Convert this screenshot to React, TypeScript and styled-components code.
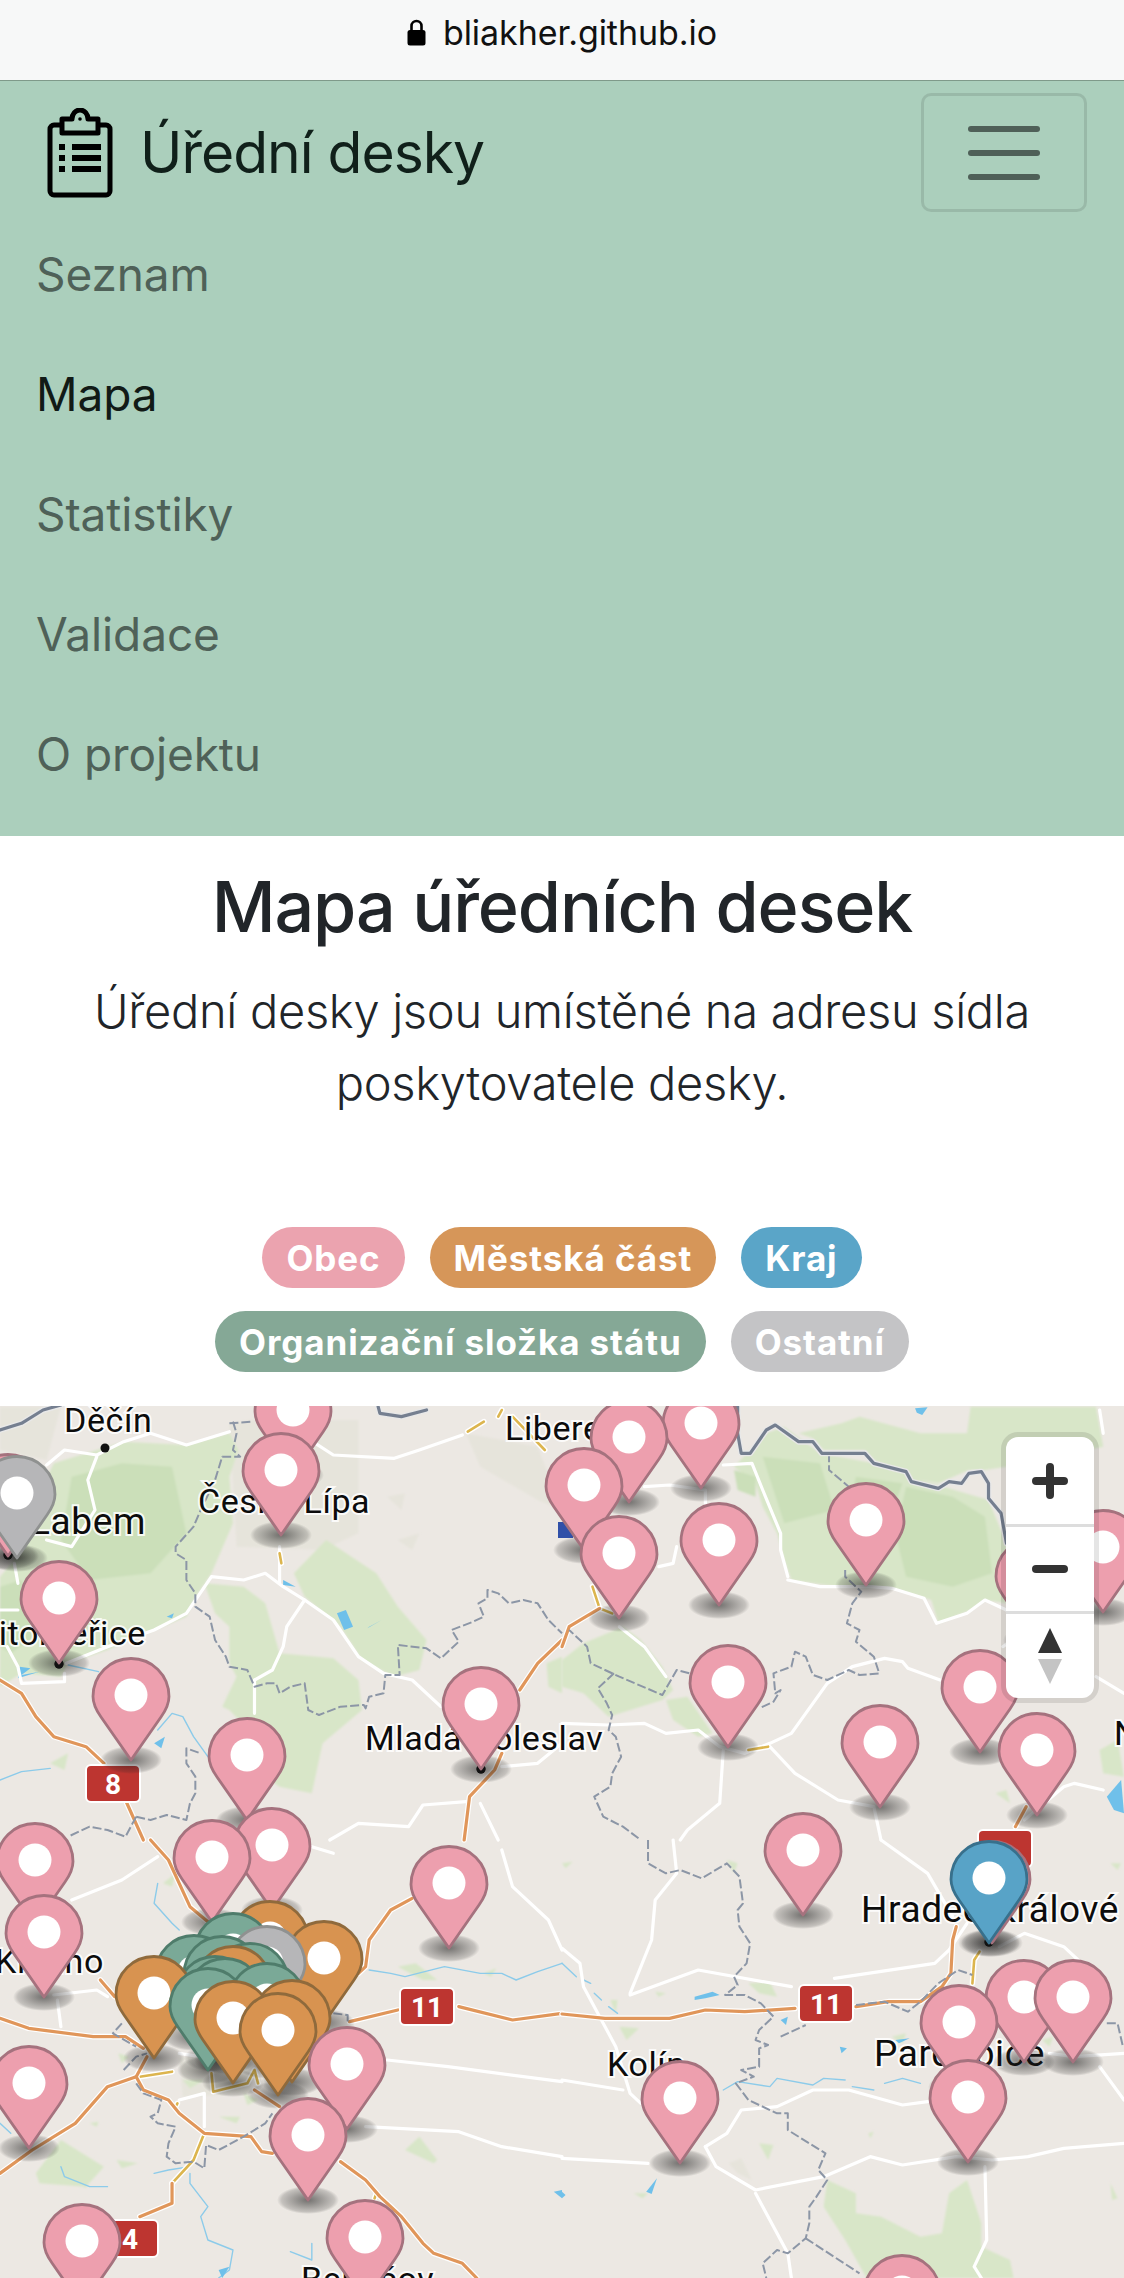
import React from "react";
import styled, { createGlobalStyle } from "styled-components";

const MAP_TOP = 1406;
const SANS = `Inter, "Liberation Sans", sans-serif`;

const Global = createGlobalStyle`
  html, body { margin: 0; padding: 0; background: #fff; }
  body { width: 1124px; height: 2278px; overflow: hidden; font-family: ${SANS}; }
`;

const Page = styled.div`
  width: 1124px;
  height: 2278px;
  display: flex;
  flex-direction: column;
  overflow: hidden;
`;

const AddressBar = styled.div`
  height: 81px;
  flex: none;
  box-sizing: border-box;
  padding-bottom: 15px;
  display: flex;
  align-items: center;
  justify-content: center;
  gap: 17px;
  background: #f7f8f8;
  border-bottom: 1px solid #7f9a8a;
  color: #111;
  font-size: 34px;
  letter-spacing: -0.05px;
`;

const Navbar = styled.nav`
  flex: none;
  height: 755px;
  box-sizing: border-box;
  background: #abcfbc;
  padding: 12px 37px 22px 36px;
  display: flex;
  flex-direction: column;
`;

const BrandRow = styled.div`
  height: 121px;
  flex: none;
  display: flex;
  justify-content: space-between;
  align-items: flex-start;
`;

const Brand = styled.div`
  display: flex;
  align-items: center;
  gap: 27px;
  padding: 15px 0 0 11px;
  color: #10201a;
  font-size: 57px;
  letter-spacing: -1px;
  line-height: 90px;
`;

const Toggler = styled.button`
  width: 166px;
  height: 119px;
  box-sizing: border-box;
  background: transparent;
  border: 3px solid rgba(0, 0, 0, 0.1);
  border-radius: 10px;
  padding: 0;
  display: flex;
  flex-direction: column;
  align-items: center;
  justify-content: center;
  gap: 18px;
`;

const TogglerBar = styled.span`
  width: 72px;
  height: 6px;
  border-radius: 3px;
  background: #4f6058;
`;

const NavList = styled.div`
  display: flex;
  flex-direction: column;
`;

const NavItem = styled.a<{ $active?: boolean }>`
  height: 120px;
  display: flex;
  align-items: center;
  font-size: 46px;
  letter-spacing: -0.1px;
  color: ${(p) => (p.$active ? "#111a16" : "#4f6158")};
`;

const Hero = styled.header`
  flex: none;
  height: 283px;
  box-sizing: border-box;
  padding-top: 29px;
  text-align: center;
  color: #212529;
`;

const Title = styled.h1`
  margin: 0 0 26px;
  font-size: 70px;
  font-weight: 500;
  line-height: 84px;
  letter-spacing: -1.1px;
`;

const Lead = styled.p`
  margin: 0 auto;
  width: 1000px;
  font-size: 47px;
  line-height: 72px;
  font-weight: 340;
  letter-spacing: -0.3px;
`;

const Legend = styled.div`
  flex: none;
  height: 287px;
  box-sizing: border-box;
  padding-top: 108px;
  display: flex;
  flex-direction: column;
  align-items: center;
  gap: 23px;
`;

const LegendRow = styled.div`
  display: flex;
  gap: 25px;
`;

const Badge = styled.span<{ $bg: string }>`
  height: 61px;
  display: flex;
  align-items: center;
  padding: 0 24px;
  border-radius: 31px;
  background: ${(p) => p.$bg};
  color: #fff;
  font-size: 35px;
  font-weight: 700;
  letter-spacing: 0.9px;
`;

const MapCanvas = styled.section`
  position: relative;
  flex: 1;
  overflow: hidden;
  background: #ece8e3;
`;

const BaseMap = styled.svg`
  position: absolute;
  left: 0;
  top: 0;
  display: block;
`;

const PlaceLabel = styled.text<{ $big?: boolean }>`
  font-family: Roboto, "Liberation Sans", sans-serif;
  font-size: ${(p) => (p.$big ? 37 : 34)}px;
  letter-spacing: 0.6px;
  fill: #0c0c0c;
  stroke: rgba(255, 255, 255, 0.85);
  stroke-width: 4px;
  paint-order: stroke;
`;

const ShieldText = styled.text`
  font-family: Roboto, "Liberation Sans", sans-serif;
  font-size: 28px;
  font-weight: 700;
  fill: #fff;
  text-anchor: middle;
`;

const PinSvg = styled.svg`
  position: absolute;
  display: block;
  overflow: visible;
`;

const PinShadow = styled.div`
  position: absolute;
  width: 62px;
  height: 28px;
  border-radius: 50%;
  background: radial-gradient(closest-side, rgba(20, 20, 20, 0.56), rgba(30, 30, 30, 0.33) 55%, rgba(40, 40, 40, 0.2) 85%, rgba(40, 40, 40, 0));
`;

const Controls = styled.div`
  position: absolute;
  left: 1006px;
  top: 31px;
  width: 88px;
  display: flex;
  flex-direction: column;
  background: #fff;
  border-radius: 12px;
  box-shadow: 0 0 0 5px rgba(0, 0, 0, 0.1);
  overflow: hidden;
`;

const ControlButton = styled.button`
  height: 87px;
  box-sizing: border-box;
  padding: 0;
  border: 0;
  background: transparent;
  display: flex;
  align-items: center;
  justify-content: center;
  & + & {
    border-top: 3px solid #ddd;
  }
`;

/* ---------- base-map data, one group for each zoom quadrant ---------- */

type Layer = { green?: string[]; shade?: string[]; gray?: string[]; water?: string[]; lake?: string[]; white?: string[]; orange?: string[]; gold?: string[]; dash?: string[]; border?: string[] };

const Q1: Layer = {
  green: [
    "150,190 270,150 345,125 520,135 640,100 665,150 640,230 650,370 590,520 540,600 520,650 430,690 300,750 190,790 170,830 60,820 0,860 0,530 40,480 100,300",
    "820,520 910,420 1050,520 1110,620 1190,720 1170,810 1100,830 1010,780 950,680 850,590",
    "570,550 680,560 740,610 780,760 930,775 1000,840 1010,930 900,1030 870,1180 780,1160 740,1130 720,1020 640,930 620,920 660,830 640,790 640,680 600,640",
    "1525,790 1568,770 1568,880 1530,860",
    "140,1090 190,1060 180,1110",
  ],
  shade: ["200,230 340,190 480,200 520,400 420,520 250,540 170,420", "0,560 60,540 110,700 30,760 0,740", "1330,850 1355,800 1400,900"],
  gray: ["640,70 700,60 1000,60 1000,400 900,450 660,440", "0,20 170,20 130,180 0,150", "1300,100 1500,140 1568,330 1500,300 1340,200", "1080,290 1130,280 1120,330", "1110,420 1170,400 1150,450"],
  water: ["190,795 275,815", "440,990 480,940 510,950 540,1010 580,1070", "0,1140 60,1115 140,1105"],
  lake: ["940,640 965,630 985,680 960,690", "1030,680 1065,660 1025,685", "790,540 825,560 790,555", "465,650 485,640 480,655", "55,800 85,805 60,825 110,815 50,835", "430,1030 460,1010 450,1045"],
  white: [
    "130,195 180,150 270,165 345,125 420,100 520,135 640,95",
    "270,170 245,240 265,330 200,440 130,420",
    "185,790 300,740 430,690 520,640 590,530 680,540 740,520 790,560 850,600 930,660 1000,770 1070,820 1150,840 1230,920",
    "780,440 780,550",
    "850,600 800,680 790,740 760,810 710,840 710,940",
    "880,130 930,165 1100,175 1170,150 1290,105",
    "40,490 50,550",
    "0,630 50,630",
    "20,740 50,800 60,850 180,845 180,820",
    "1400,1100 1500,1090 1568,1030",
    "920,1320 1000,1270 1140,1280 1180,1215 1300,1205",
    "1340,1210 1390,1320",
  ],
  orange: ["0,840 60,880 100,950 150,1010 240,1040 290,1090", "350,1200 400,1320", "1568,720 1500,790 1450,870", "1400,1060 1380,1110 1310,1190 1295,1320"],
  gold: ["780,460 785,490", "1305,95 1350,65", "1400,30 1390,50", "1430,50 1520,150"],
  dash: [
    "650,65 660,100 650,150 670,170 620,170 600,240 560,330 540,380 490,440 490,460 520,480 520,540 545,580 545,620 585,650 600,720 630,770 640,800 690,810 710,860 745,850 770,850 780,880 810,860 850,850 855,890 860,930 890,945 950,920 1015,915 1020,925 1030,890 1070,880 1075,825 1115,825 1110,735 1190,745 1230,775 1280,725 1260,690 1320,665 1350,650 1335,610 1360,595 1360,570 1390,580 1420,610 1460,600 1500,610 1530,660 1568,700",
    "380,1250 420,1260 465,1245 520,1260 530,1210 545,1180 545,1130 520,1090 520,1045 560,1060",
    "380,1250 350,1310 300,1290 250,1280 190,1310",
    "640,70 700,65",
  ],
  border: ["1055,20 1060,40 1120,50 1190,30", "0,90 60,70 120,30 170,15"],
};

const Q2: Layer = {
  green: [
    "480,200 570,100 620,80 720,160 870,190 1000,240 1190,300 1240,430 1240,610 1180,600 1140,630 1050,670 1030,600 910,560 770,560 640,540 620,480 600,400 560,320 540,250",
    "780,70 830,50 1000,100 1130,100 1140,20 1490,20 1510,140 1240,200 1180,210 1135,210 1050,250 975,235 870,180 845,150 730,150 700,115 660,100",
    "0,780 60,730 170,680 220,720 280,800 310,870 280,900 130,950 60,880 0,860",
    "290,900 350,890 420,1000 380,1010 310,960",
    "1500,1050 1550,1020 1568,1130 1510,1120",
    "1210,1180 1240,1170 1250,1210",
  ],
  shade: ["960,260 1090,290 1180,350 1200,520 1090,560 960,530 930,400", "560,170 720,190 760,330 620,370", "480,210 540,230 540,290 490,270", "820,230 950,250 920,340 800,330"],
  lake: ["985,25 1020,22 1005,45 990,38", "1520,1190 1560,1140 1568,1240 1540,1230"],
  white: [
    "630,540 720,560 770,560 860,560 920,565 1010,595 1045,670 1130,640 1180,600 1240,630",
    "450,195 530,190 560,270 610,400 610,450 630,530",
    "230,260 300,255 400,270 400,310",
    "320,440 310,490 270,500",
    "160,680 230,740 290,830",
    "0,970 130,975 230,970 290,1000 380,990 440,1040 510,1060 580,1030 640,1000 700,910 740,850 810,800 900,775 950,785 965,805 1055,840",
    "450,1050 440,1210 350,1290 330,1320",
    "580,1040 650,1120 770,1200 870,1220 890,1320",
    "1290,1260 1400,1160 1430,1150 1510,1170",
    "1230,740 1280,700",
    "1490,830 1568,880",
    "1500,30 1510,100",
  ],
  orange: ["105,625 20,680 0,740", "1265,1280 1295,1220"],
  gold: ["520,1050 575,1040", "85,560 105,625 140,640"],
  dash: [
    "745,160 745,210 800,260",
    "790,510 790,530 835,575 810,610 795,670 830,690 820,725 870,770 885,820 830,825 800,810 740,840 700,825 680,770 650,755 640,800 590,820 595,880 610,870 590,905 550,925",
    "355,820 320,810 280,885 160,830 80,790 70,740 20,690",
    "145,820 100,865 125,910 140,945 130,990 150,1010 165,1070 140,1120 135,1160 90,1190 115,1250 170,1280 220,1320",
  ],
  border: ["490,20 490,100 500,160 525,160 570,90 595,75 660,125 700,125 725,160 845,160 870,190 960,215 975,245 1050,265 1080,245 1115,250 1135,220 1170,215 1190,250 1190,295 1225,340 1240,430"],
};

const Q3: Layer = {
  green: [
    "100,1000 170,900 290,980 240,1040 110,1030",
    "1110,380 1160,370 1220,420 1180,420",
    "1130,930 1170,890 1220,960 1210,970",
    "455,130 490,100 480,140",
    "330,640 360,650 340,670",
    "610,830 670,830 660,850",
    "1350,400 1385,385 1370,410",
    "325,960 385,970 340,985",
    "250,850 275,845 270,860",
    "220,1030 245,1030 240,1045",
    "510,720 570,720 530,745",
    "680,760 720,780 690,795",
  ],
  gray: ["500,650 700,650 700,760 510,770"],
  water: ["440,130 430,190 480,250 500,270", "1030,390 1090,400 1130,410 1240,380 1340,400 1400,400 1440,420 1500,395 1568,370", "530,1000 530,1030 580,1100 560,1130 580,1200 650,1230 640,1290 610,1314", "810,1235 870,1260 870,1210", "170,980 180,1010 250,1040 300,1040", "430,1000 470,990 530,980", "0,850 30,880"],
  lake: ["1545,1055 1568,1050 1568,1075", "610,1290 640,1280 620,1314"],
  white: [
    "200,180 340,120 440,50",
    "150,465 270,450 300,470",
    "160,480 170,560",
    "1080,660 1250,680 1568,725",
    "1020,860 1280,875 1400,920 1568,950",
    "870,20 930,40",
    "1400,30 1430,140 1530,240 1568,330",
    "500,780 570,760 570,860",
    "500,640 620,660",
  ],
  orange: [
    "0,535 80,565 260,590 350,590 400,625",
    "410,650 380,710 300,740 210,850 90,930 0,1000",
    "420,0 470,60 530,200 580,245",
    "1150,175 1090,210 1030,300 1020,380 1000,400",
    "975,545 1110,510",
    "1280,500 1430,540 1568,520",
    "710,750 780,800",
    "380,710 400,750 470,780 500,820 570,880 700,890 730,935 760,940",
    "950,965 1020,1020 1060,1070 1120,1130 1180,1210 1210,1240 1290,1270 1330,1314",
    "480,1030 480,1090 390,1130",
    "280,420 320,470",
  ],
  gold: ["390,710 480,695", "590,700 595,755 690,730 710,690 720,730", "570,880 540,960 480,1030", "1050,1060 1045,1075", "495,790 490,800"],
  dash: [
    "340,550 315,580 380,620",
    "345,690 380,650 410,640",
    "380,730 400,760 450,780 440,820 420,830 440,850 490,860 470,910 465,950 490,970 540,965 570,985 575,915 610,930 680,890 740,850 760,820",
    "930,520 970,525 970,545",
  ],
};

const Q4: Layer = {
  green: [
    "740,1020 820,1060 820,1120 890,1130 1000,1190 1060,1180 1080,1060 1130,1020 1170,1150 1170,1220 1250,1260 1260,1314 850,1314 790,1200 730,1100",
    "520,430 580,425 600,470 550,460",
    "160,560 215,565 180,600",
    "135,480 155,480 150,520",
    "550,910 590,915 575,960",
    "200,1060 240,1060 225,1075",
    "1530,1030 1550,1075 1535,1080",
    "855,880 870,875 860,895",
    "260,455 290,460 270,470",
    "460,60 490,70 480,100",
    "1530,70 1560,70 1550,90",
    "0,70 30,65 10,85",
    "920,590 960,580 950,610",
    "1340,600 1370,590 1360,620",
  ],
  gray: ["465,970 500,955 530,1020 490,1000"],
  water: ["450,750 490,725 580,740 600,715 700,735 730,715 790,720", "810,740 870,750", "900,730 950,715 1000,730", "0,370 40,410", "60,420 80,430", "90,460 110,480", "130,500 155,520"],
  lake: ["370,470 420,455 440,465 400,475 370,480", "610,540 630,530 625,555", "775,620 795,625 780,640", "235,1055 265,1015 250,1062", "930,600 970,595 940,610", "0,1055 10,1065 0,1075"],
  white: [
    "0,325 50,370 60,440 110,540 150,620 190,760 220,790",
    "190,460 250,300 260,180 320,100 310,0",
    "190,465 380,390 640,440",
    "760,415 1040,370 1080,330 1130,250",
    "890,0 1020,100 1090,230",
    "1220,320 1290,280 1400,320 1500,420",
    "0,720 170,750",
    "0,955 240,970",
    "400,920 460,880 500,810 600,800 700,750 800,750 950,795 1020,785",
    "400,920 430,980 540,1050 730,1010 860,950 950,975 1100,950 1200,960 1300,950 1400,925 1568,910",
    "540,1060 630,1240 640,1314",
    "1180,980 1185,1200 1150,1280 1170,1314",
    "1500,680 1568,780",
    "1360,640 1430,650 1568,640",
  ],
  orange: ["0,522 120,535 300,535 400,510 510,515 650,505", "820,500 910,485 1000,485 1060,440 1085,400 1090,300 1100,260"],
  gold: ["1145,430 1150,360 1165,335"],
  dash: [
    "240,0 240,70 290,100 330,90 390,115 460,70 495,110 505,190 490,210 495,260 525,310 515,370 480,410 490,435 455,465 510,465 555,490 590,530 550,570 540,600 575,615 550,625 550,680 500,690 535,710 485,730 520,780 600,820 630,820 630,870 735,940 715,990 740,1020 710,1070 690,1100 690,1150 680,1195 630,1240 600,1230 560,1270 570,1314",
    "680,1195 830,1300",
    "610,590 680,555",
    "820,495 900,485 965,515 1000,485 1050,430 1105,390 1145,405",
    "1520,550 1550,550 1565,620",
  ],
};

const MapLayer = ({ x, y, sx, sy, data }: { x: number; y: number; sx: number; sy: number; data: Layer }) => {
  const lines = (list: string[] | undefined, props: React.SVGProps<SVGPolylineElement>) =>
    (list ?? []).map((pts) => <polyline key={pts} points={pts} fill="none" strokeLinejoin="round" strokeLinecap="round" vectorEffect="non-scaling-stroke" {...props} />);
  return (
    <g transform={`translate(${x} ${y}) scale(${sx} ${sy})`}>
      <g filter="url(#soft)">
        {(data.gray ?? []).map((p) => <polygon key={p} points={p} fill="#e6e4db" />)}
        {(data.green ?? []).map((p) => <polygon key={p} points={p} fill="#d8e6c8" />)}
        {(data.shade ?? []).map((p) => <polygon key={p} points={p} fill="#cbdfb9" />)}
      </g>
      {lines(data.water, { stroke: "#8ccbea", strokeWidth: 1.4 })}
      {(data.lake ?? []).map((p) => <polygon key={p} points={p} fill="#6fc0ea" />)}
      {lines(data.white, { stroke: "#fff", strokeWidth: 3.2 })}
      {lines(data.gold, { stroke: "#fff", strokeWidth: 5.5 })}
      {lines(data.gold, { stroke: "#dcb54e", strokeWidth: 2.6 })}
      {lines(data.orange, { stroke: "#fff", strokeWidth: 5.6 })}
      {lines(data.orange, { stroke: "#e0965a", strokeWidth: 3.2 })}
      {lines(data.dash, { stroke: "#8c96a6", strokeWidth: 2, strokeDasharray: "9 3", strokeLinecap: "butt" })}
      {lines(data.border, { stroke: "#e8e8e8", strokeWidth: 6 })}
      {lines(data.border, { stroke: "#757f90", strokeWidth: 3.2 })}
    </g>
  );
};

const labels = [
  { t: "Děčín", x: 64, y: 1432 },
  { t: "Labem", x: 146, y: 1534, end: true, big: true },
  { t: "Litoměřice", x: 146, y: 1645, end: true },
  { t: "Česká Lípa", x: 198, y: 1513 },
  { t: "Liberec", x: 505, y: 1440 },
  { t: "Mladá Boleslav", x: 365, y: 1750 },
  { t: "Hradec Králové", x: 861, y: 1922, big: true },
  { t: "Pardubice", x: 874, y: 2066, big: true },
  { t: "Kolín", x: 607, y: 2076 },
  { t: "Kladno", x: 104, y: 1973, end: true },
  { t: "Benešov", x: 301, y: 2291 },
  { t: "Náchod", x: 1114, y: 1745 },
];

const shields = [
  { t: "8", x: 86, y: 1765 },
  { t: "11", x: 400, y: 1988 },
  { t: "11", x: 799, y: 1985 },
  { t: "4", x: 104, y: 2220, tx: 130 },
  { t: "", x: 978, y: 1830 },
];

const cityDots = [
  [105, 1448],
  [8, 1555],
  [59, 1664],
  [481, 1769],
  [989, 1942],
];

type Kind = "pink" | "orange" | "green" | "blue" | "gray";
const pinColors: Record<Kind, { fill: string; line: string }> = {
  pink: { fill: "#ed9fae", line: "#a5727e" },
  orange: { fill: "#d89350", line: "#8f6a3c" },
  green: { fill: "#7aa997", line: "#4f7c6b" },
  blue: { fill: "#58a3c7", line: "#38708c" },
  gray: { fill: "#b6b6b8", line: "#8f9190" },
};

const pins: { x: number; tip: number; k: Kind }[] = [
  { x: 701, tip: 1488, k: "pink" },
  { x: 293, tip: 1475, k: "pink" },
  { x: 629, tip: 1502, k: "pink" },
  { x: 281, tip: 1535, k: "pink" },
  { x: 584, tip: 1550, k: "pink" },
  { x: 8, tip: 1556, k: "pink" },
  { x: 17, tip: 1558, k: "gray" },
  { x: 866, tip: 1585, k: "pink" },
  { x: 719, tip: 1605, k: "pink" },
  { x: 1103, tip: 1612, k: "pink" },
  { x: 619, tip: 1618, k: "pink" },
  { x: 1034, tip: 1640, k: "pink" },
  { x: 59, tip: 1663, k: "pink" },
  { x: 728, tip: 1747, k: "pink" },
  { x: 980, tip: 1752, k: "pink" },
  { x: 131, tip: 1760, k: "pink" },
  { x: 481, tip: 1769, k: "pink" },
  { x: 880, tip: 1807, k: "pink" },
  { x: 1037, tip: 1815, k: "pink" },
  { x: 247, tip: 1820, k: "pink" },
  { x: 272, tip: 1910, k: "pink" },
  { x: 803, tip: 1915, k: "pink" },
  { x: 212, tip: 1922, k: "pink" },
  { x: 35, tip: 1925, k: "pink" },
  { x: 992, tip: 1943, k: "pink" },
  { x: 989, tip: 1943, k: "blue" },
  { x: 449, tip: 1948, k: "pink" },
  { x: 44, tip: 1997, k: "pink" },
  { x: 270, tip: 2003, k: "orange" },
  { x: 233, tip: 2015, k: "green" },
  { x: 324, tip: 2023, k: "orange" },
  { x: 267, tip: 2028, k: "gray" },
  { x: 194, tip: 2037, k: "green" },
  { x: 222, tip: 2038, k: "green" },
  { x: 250, tip: 2045, k: "green" },
  { x: 233, tip: 2048, k: "orange" },
  { x: 215, tip: 2058, k: "green" },
  { x: 225, tip: 2060, k: "green" },
  { x: 154, tip: 2058, k: "orange" },
  { x: 267, tip: 2065, k: "green" },
  { x: 1024, tip: 2062, k: "pink" },
  { x: 1073, tip: 2062, k: "pink" },
  { x: 208, tip: 2070, k: "green" },
  { x: 292, tip: 2082, k: "orange" },
  { x: 233, tip: 2083, k: "orange" },
  { x: 959, tip: 2087, k: "pink" },
  { x: 278, tip: 2095, k: "orange" },
  { x: 347, tip: 2129, k: "pink" },
  { x: 29, tip: 2148, k: "pink" },
  { x: 968, tip: 2162, k: "pink" },
  { x: 680, tip: 2163, k: "pink" },
  { x: 308, tip: 2200, k: "pink" },
  { x: 365, tip: 2302, k: "pink" },
  { x: 82, tip: 2306, k: "pink" },
  { x: 902, tip: 2357, k: "pink" },
];

const Pin = ({ x, tip, k }: { x: number; tip: number; k: Kind }) => {
  const c = pinColors[k];
  return (
    <PinSvg width="80" height="105" viewBox="0 0 80 105" style={{ left: x - 40, top: tip - 103 - MAP_TOP }}>
      <path
        d="M40 103 L10 60 C5 53 2 47 2 39.5 C2 18 19 1.5 40 1.5 C61 1.5 78 18 78 39.5 C78 47 75 53 70 60 Z"
        fill={c.fill}
        stroke={c.line}
        strokeWidth="2.8"
        strokeLinejoin="round"
      />
      <circle cx="40" cy="38" r="16.5" fill="#fff" />
    </PinSvg>
  );
};

const ClipboardIcon = () => (
  <svg width="66" height="90" viewBox="0 0 66 90" fill="none" stroke="#000">
    <path d="M14 17H7a4 4 0 0 0-4 4v62a4 4 0 0 0 4 4h52a4 4 0 0 0 4-4V21a4 4 0 0 0-4-4h-7" strokeWidth="5" />
    <path d="M15 25V11h10c0-5 3.500-9 8-9s8 4 8 9h10v14Z" strokeWidth="5" strokeLinejoin="round" />
    <circle cx="33" cy="11" r="1.800" fill="#000" stroke="none" />
    <g fill="#000" stroke="none">
      <rect x="12" y="36" width="6" height="6" />
      <rect x="25" y="36" width="29" height="6" />
      <rect x="12" y="47" width="6" height="6" />
      <rect x="25" y="47" width="29" height="6" />
      <rect x="12" y="58" width="6" height="6" />
      <rect x="25" y="58" width="29" height="6" />
    </g>
  </svg>
);

const LockIcon = () => (
  <svg width="19" height="27" viewBox="0 0 19 27">
    <path d="M4.500 12V7a5 5 0 0 1 10 0v5" fill="none" stroke="#000" strokeWidth="2.600" />
    <rect x="0.500" y="11" width="18" height="15.500" rx="2.500" fill="#000" />
  </svg>
);

const App = () => (
  <Page>
    <Global />
    <AddressBar>
      <LockIcon />
      <span>bliakher.github.io</span>
    </AddressBar>
    <Navbar>
      <BrandRow>
        <Brand>
          <ClipboardIcon />
          <span>Úřední desky</span>
        </Brand>
        <Toggler aria-label="Menu">
          <TogglerBar />
          <TogglerBar />
          <TogglerBar />
        </Toggler>
      </BrandRow>
      <NavList>
        <NavItem>Seznam</NavItem>
        <NavItem $active>Mapa</NavItem>
        <NavItem>Statistiky</NavItem>
        <NavItem>Validace</NavItem>
        <NavItem>O projektu</NavItem>
      </NavList>
    </Navbar>
    <Hero>
      <Title>Mapa úředních desek</Title>
      <Lead>Úřední desky jsou umístěné na adresu sídla poskytovatele desky.</Lead>
    </Hero>
    <Legend>
      <LegendRow>
        <Badge $bg="#eba3af">Obec</Badge>
        <Badge $bg="#d69659">Městská část</Badge>
        <Badge $bg="#5aa5c8">Kraj</Badge>
      </LegendRow>
      <LegendRow>
        <Badge $bg="#85a896">Organizační složka státu</Badge>
        <Badge $bg="#c4c4c6">Ostatní</Badge>
      </LegendRow>
    </Legend>
    <MapCanvas>
      <BaseMap width="1124" height="872" viewBox={`0 ${MAP_TOP} 1124 872`}>
        <defs>
          <filter id="soft" x="-5%" y="-5%" width="110%" height="110%">
            <feGaussianBlur stdDeviation="2.500" />
          </filter>
        </defs>
        <MapLayer x={0} y={1400} sx={1 / 2.79} sy={1 / 3} data={Q1} />
        <MapLayer x={562} y={1400} sx={1 / 2.79} sy={1 / 3} data={Q2} />
        <MapLayer x={0} y={1840} sx={1 / 2.79} sy={1 / 3} data={Q3} />
        <MapLayer x={562} y={1840} sx={1 / 2.79} sy={1 / 3} data={Q4} />
        <rect x="558" y="1522" width="15" height="16" fill="#3050a8" />
        {cityDots.map(([x, y]) => (
          <circle key={`${x}-${y}`} cx={x} cy={y} r="4.500" fill="#111" />
        ))}
        {labels.map((l) => (
          <PlaceLabel key={l.t} $big={l.big} x={l.x} y={l.y} textAnchor={l.end ? "end" : "start"}>
            {l.t}
          </PlaceLabel>
        ))}
        {shields.map((s) => (
          <g key={`${s.x}-${s.y}`}>
            <rect x={s.x} y={s.y} width="54" height="37" rx="5" fill="#bd3530" stroke="#fff" strokeWidth="2" />
            <ShieldText x={s.tx ?? s.x + 27} y={s.y + 29}>
              {s.t}
            </ShieldText>
          </g>
        ))}
      </BaseMap>
      {pins.map((p, i) => (
        <PinShadow key={`s${i}`} style={{ left: p.x - 31, top: p.tip - 14 - MAP_TOP }} />
      ))}
      {cityDots.slice(1).map(([x, y]) => (
        <PinSvg key={`d${x}`} width="10" height="10" viewBox="0 0 10 10" style={{ left: x - 5, top: y - 5 - MAP_TOP }}>
          <circle cx="5" cy="5" r="4.500" fill="#111" />
        </PinSvg>
      ))}
      {pins.map((p, i) => (
        <Pin key={`p${i}`} x={p.x} tip={p.tip} k={p.k} />
      ))}
      <Controls>
        <ControlButton aria-label="Přiblížit">
          <svg width="36" height="36" viewBox="0 0 36 36">
            <path d="M4 18H32M18 4V32" stroke="#333" strokeWidth="8" strokeLinecap="round" />
          </svg>
        </ControlButton>
        <ControlButton aria-label="Oddálit">
          <svg width="36" height="10" viewBox="0 0 36 10">
            <path d="M4 5H32" stroke="#333" strokeWidth="8" strokeLinecap="round" />
          </svg>
        </ControlButton>
        <ControlButton aria-label="Kompas">
          <svg width="24" height="56" viewBox="0 0 24 56">
            <path d="M12 0L24 25H0Z" fill="#333" />
            <path d="M12 56L24 31H0Z" fill="#c4c4c4" />
          </svg>
        </ControlButton>
      </Controls>
    </MapCanvas>
  </Page>
);

export default App;
